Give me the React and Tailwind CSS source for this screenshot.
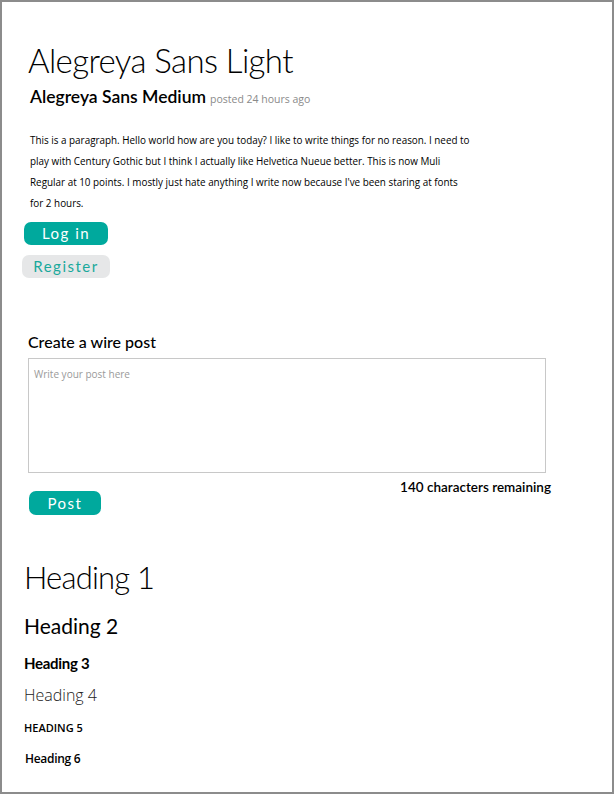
export default function App() {
  const alegreya = "font-['Lato',sans-serif]";
  const muli = "font-['Open_Sans',sans-serif]";

  return (
    <div className="w-[614px] h-[794px] bg-white border-2 border-[#8c8c8c] overflow-hidden text-black">
      <section className="pl-[26px] pt-[38px]">
        <h1 className={`${alegreya} font-light text-[33px] leading-[40px] tracking-[-0.6px]`}>Alegreya Sans Light</h1>
        <div className="flex items-baseline gap-[4px] mt-[6px] pl-[2px]">
          <h2 className={`${alegreya} font-semibold text-[17.5px] leading-[22px]`}>Alegreya Sans Medium</h2>
          <span className={`${muli} text-[10.5px] text-[#8a8a8a]`}>posted 24 hours ago</span>
        </div>
        <p className={`${muli} text-[9.9px] leading-[21px] whitespace-nowrap pl-[2px] mt-[22px]`}>
          This is a paragraph. Hello world how are you today? I like to write things for no reason. I need to
          <br />
          play with Century Gothic but I think I actually like Helvetica Nueue better. This is now Muli
          <br />
          Regular at 10 points. I mostly just hate anything I write now because I've been staring at fonts
          <br />
          for 2 hours.
        </p>
        <div className="flex flex-col items-start mt-[8px]">
          <button className={`${alegreya} w-[84px] h-[23px] ml-[-4px] rounded-[7px] bg-[#00a99d] text-white text-[15px] tracking-[1.5px] leading-none`}>
            Log in
          </button>
          <button className={`${alegreya} w-[88px] h-[23px] ml-[-6px] mt-[10px] rounded-[7px] bg-[#e6e7e8] text-[#1aa99c] text-[15px] tracking-[1.5px] leading-none`}>
            Register
          </button>
        </div>
      </section>

      <section className="pl-[26px] mt-[54px] w-[549px]">
        <h3 className={`${alegreya} font-medium text-[16px] leading-[20px]`}>Create a wire post</h3>
        <textarea
          placeholder="Write your post here"
          className={`${muli} block w-[518px] h-[115px] mt-[6px] border border-[#c8c8c8] px-[5px] py-[8px] text-[10px] placeholder:text-[#9a9a9a] resize-none`}
        />
        <div className="flex justify-between items-start">
          <button className={`${alegreya} w-[72px] h-[24px] mt-[18px] ml-[1px] rounded-[7px] bg-[#00a99d] text-white text-[15px] tracking-[1.5px] leading-none`}>
            Post
          </button>
          <span className={`${alegreya} font-semibold text-[13.5px] leading-[18px] mt-[5px]`}>140 characters remaining</span>
        </div>
      </section>

      <section className="pl-[22px] mt-[42px] flex flex-col items-start">
        <h1 className={`${alegreya} font-light text-[31px] leading-[40px] tracking-[-0.8px]`}>Heading 1</h1>
        <h2 className={`${alegreya} text-[21px] leading-[26px] mt-[16px]`}>Heading 2</h2>
        <h3 className={`${alegreya} font-bold text-[15px] leading-[20px] mt-[14px] tracking-[-0.3px]`}>Heading 3</h3>
        <h4 className={`${muli} font-light text-[16px] leading-[20px] mt-[12px] text-[#222]`}>Heading 4</h4>
        <h5 className={`${muli} font-semibold text-[11px] leading-[16px] mt-[15px] uppercase`}>Heading 5</h5>
        <h6 className={`${muli} font-semibold text-[12px] leading-[16px] mt-[15px] ml-[1px] tracking-[-0.3px]`}>Heading 6</h6>
      </section>
    </div>
  );
}
